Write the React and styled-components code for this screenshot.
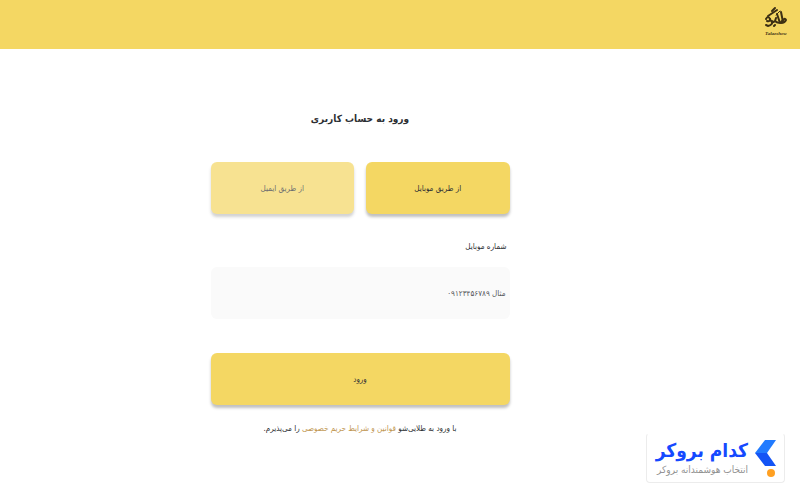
import React, { useState } from 'react';
import styled, { createGlobalStyle } from 'styled-components';

const GlobalStyle = createGlobalStyle`
    * {
        box-sizing: border-box;
    }
    body {
        margin: 0;
        background-color: #ffffff;
        color: #2d2f33;
        font-family: 'DejaVu Sans Condensed', 'DejaVu Sans', sans-serif;
    }
    button, input {
        font-family: inherit;
    }
`;

const Page = styled.div`
    width: 100%;
    min-height: 100vh;
`;

const Header = styled.header`
    display: flex;
    justify-content: flex-start;
    align-items: flex-start;
    height: 49px;
    padding: 6px 13px;
    background-color: #f4d763;
`;

const LogoLink = styled.a`
    display: block;
    color: #3d3013;
    text-decoration: none;
`;

const Main = styled.main`
    display: flex;
    justify-content: center;
    padding: 58px 20px 0;

    @media (min-width: 600px) {
        padding: 58px 10% 0 0;
    }
`;

const LoginForm = styled.form`
    width: 100%;
    max-width: 299px;
    display: flex;
    flex-direction: column;
`;

const Title = styled.h1`
    margin: 0 0 31px;
    font-size: 10px;
    line-height: 24px;
    font-weight: 700;
    text-align: center;
`;

const Tabs = styled.div`
    display: grid;
    grid-template-columns: 1fr 1fr;
    gap: 12px;
    margin-bottom: 21px;
`;

const Button = styled.button`
    height: 52px;
    padding: 0;
    border: none;
    border-radius: 6px;
    background-color: #f4d763;
    box-shadow: 0 3px 3px rgba(0, 0, 0, 0.25);
    color: #2d2f33;
    font-size: 8px;
    opacity: ${props => props.$faded ? 0.7 : 1};
    cursor: pointer;
`;

const Label = styled.label`
    margin-bottom: 8px;
    padding: 0 3px;
    font-size: 8px;
    line-height: 24px;
`;

const PhoneInput = styled.input`
    width: 100%;
    height: 52px;
    margin-bottom: 34px;
    padding: 0 4px;
    border: none;
    border-radius: 6px;
    background-color: #fafafa;
    color: #2d2f33;
    font-size: 8px;

    &::placeholder {
        color: #55575a;
        opacity: 1;
    }
`;

const Terms = styled.p`
    margin: 12px 0 0;
    font-size: 8px;
    line-height: 24px;
    text-align: center;
    white-space: nowrap;
`;

const TermsLink = styled.a`
    color: #c0954f;
    text-decoration: none;
`;

const BrokerBadge = styled.a`
    position: fixed;
    right: 15px;
    bottom: 17px;
    display: flex;
    align-items: center;
    gap: 7px;
    width: 139px;
    height: 50px;
    padding: 0 8px;
    border: 1px solid #ececec;
    border-top-color: #ffffff;
    border-radius: 4px;
    background-color: #ffffff;
    text-decoration: none;

    svg {
        flex-shrink: 0;
    }
`;

const BadgeText = styled.span`
    display: flex;
    flex-direction: column;
    white-space: nowrap;
`;

const BadgeName = styled.span`
    color: #1549ff;
    font-size: 19px;
    line-height: 24px;
    font-weight: 700;
`;

const BadgeSlogan = styled.span`
    color: #929292;
    font-size: 10px;
    line-height: 16px;
`;

const Logo = () => (
    <svg width="22" height="32" viewBox="0 0 22 32" fill="none" aria-hidden="true">
        <g stroke="#3d3013" strokeLinecap="round">
            <path d="M7 5 L10 2" strokeWidth="2" />
            <path d="M3 10 L12 4" strokeWidth="2" />
            <path d="M11 9 L15 5" strokeWidth="1" />
            <path d="M16 6 L18 16" strokeWidth="2" />
            <path d="M12 8 L15 17" strokeWidth="2" />
            <path d="M1 13 Q3 9 5 13 Q5 16 2 15" strokeWidth="2" />
            <path d="M5 13 Q7 18 10 15 L11 12 M10 15 Q13 18 16 16 Q20 11 21 14 Q20 17 16 17" strokeWidth="2" />
            <path d="M7 15 Q8 19 3 20 L1 19 M9 20 L10 19" strokeWidth="2" />
        </g>
        <text x="11" y="29" textAnchor="middle" fontFamily="'Liberation Serif', serif" fontSize="5" fontStyle="italic" fontWeight="700" fill="#3d3013">Talaeshow</text>
    </svg>
);

const BrokerIcon = () => (
    <svg width="21" height="40" viewBox="0 0 21 40" aria-hidden="true">
        <path d="M10 2 H21 L12 15 H0 Z" fill="#217bff" />
        <path d="M0 15 H12 L21 28 H10 Z" fill="#1454f5" />
        <circle cx="16" cy="35" r="4" fill="#ffa022" />
    </svg>
);

function App() {
    const [method, setMethod] = useState('mobile');

    return (
        <>
            <GlobalStyle />
            <Page dir="rtl" lang="fa">
                <Header>
                    <LogoLink href="#" aria-label="طلایی‌شو">
                        <Logo />
                    </LogoLink>
                </Header>
                <Main>
                    <LoginForm onSubmit={e => e.preventDefault()}>
                        <Title>ورود به حساب کاربری</Title>
                        <Tabs>
                            <Button type="button" $faded={method !== 'mobile'} onClick={() => setMethod('mobile')}>از طریق موبایل</Button>
                            <Button type="button" $faded={method !== 'email'} onClick={() => setMethod('email')}>از طریق ایمیل</Button>
                        </Tabs>
                        <Label htmlFor="phone">شماره موبایل</Label>
                        <PhoneInput id="phone" type="text" inputMode="tel" placeholder="مثال ۰۹۱۲۳۴۵۶۷۸۹" />
                        <Button type="submit">ورود</Button>
                        <Terms>
                            با ورود به طلایی‌شو <TermsLink href="#">قوانین و شرایط حریم خصوصی</TermsLink> را می‌پذیرم.
                        </Terms>
                    </LoginForm>
                </Main>
                <BrokerBadge href="#">
                    <BrokerIcon />
                    <BadgeText>
                        <BadgeName>کدام بروکر</BadgeName>
                        <BadgeSlogan>انتخاب هوشمندانه بروکر</BadgeSlogan>
                    </BadgeText>
                </BrokerBadge>
            </Page>
        </>
    );
}

export default App;
